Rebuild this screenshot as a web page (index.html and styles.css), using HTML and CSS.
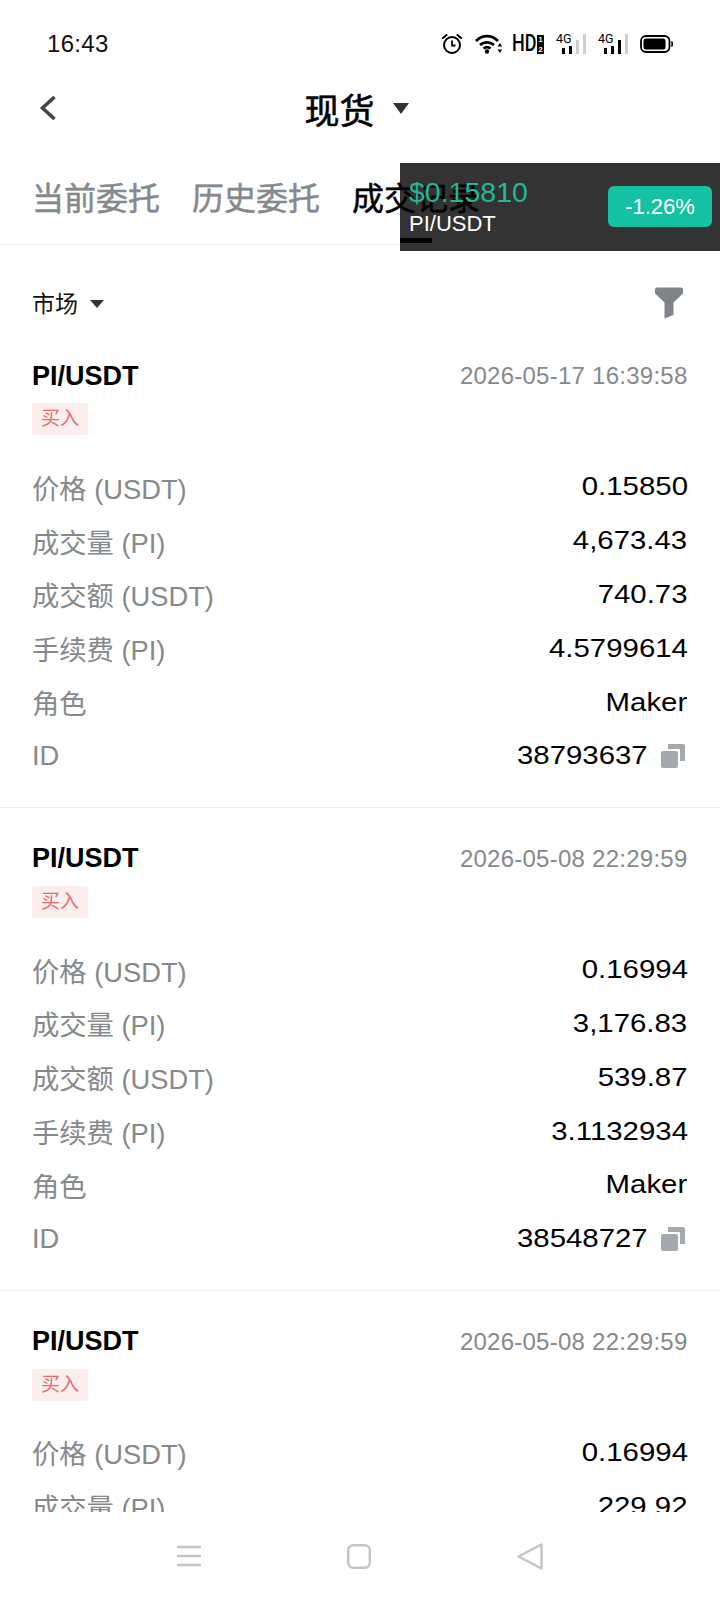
FILE: index.html
```html
<!doctype html>
<html lang="zh">

<head>
  <meta charset="UTF-8" />
  <meta name="viewport" content="width=device-width, initial-scale=1.0" />
  <title>现货</title>
  <link rel="stylesheet" href="styles.css">
</head>

<body>
  <div class="page">
    <div class="status-bar">
      <span class="time">16:43</span>
      <div class="status-icons">
        <svg class="ic-alarm" width="20" height="20" viewBox="0 0 20 20" fill="none" stroke="#000" stroke-width="2">
          <circle cx="10" cy="11" r="8" />
          <path d="M10 6.500V11.500H13.500" stroke-width="1.800" />
          <path d="M1 4L4.500 1M19 4L15.500 1" stroke-linecap="round" />
        </svg>
        <svg class="ic-wifi" width="27" height="20" viewBox="0 0 27 20" fill="none" stroke="#000" stroke-width="2.800">
          <path d="M1 7C7.500 .5 16.500 .5 23 7" />
          <path d="M5 11C9 7.500 15 7.500 19 11" />
          <path d="M8.500 14.500C10.500 13 13.500 13 15.500 14.500" />
          <circle cx="12" cy="17.500" r="2.200" fill="#000" stroke="none" />
          <path d="M25 9L22.500 12.500H27ZM25 19L22.500 15.500H27Z" fill="#000" stroke="none" />
        </svg>
        <div class="hd">
          <span class="hd-text">HD</span>
          <span class="sim-box"><b>1</b><b>2</b></span>
        </div>
        <div class="signal">
          <span class="net">4G</span>
          <div class="bars">
            <i class="b1"></i><i class="b2"></i><i class="b3 off"></i><i class="b4 off"></i>
          </div>
        </div>
        <div class="signal">
          <span class="net">4G</span>
          <div class="bars">
            <i class="b1"></i><i class="b2"></i><i class="b3"></i><i class="b4 off"></i>
          </div>
        </div>
        <svg class="ic-battery" width="33" height="18" viewBox="0 0 33 18" fill="none">
          <rect x="1" y="1" width="28.500" height="16" rx="5" stroke="#000" stroke-width="1.800" />
          <rect x="3.500" y="3.500" width="22" height="11" rx="2.500" fill="#000" />
          <path d="M31.500 6.500C32.500 7.500 32.500 10.500 31.500 11.500" stroke="#000" stroke-width="1.600" />
        </svg>
      </div>
    </div>

    <header class="top-bar">
      <svg class="back" width="18" height="26" viewBox="0 0 18 26" fill="none" stroke="#444" stroke-width="3.600">
        <path d="M15.500 2L3.500 13L15.500 24" />
      </svg>
      <div class="title">
        <span>现货</span>
        <i class="caret caret-lg"></i>
      </div>
    </header>

    <nav class="tabs">
      <a class="tab">当前委托</a>
      <a class="tab">历史委托</a>
      <a class="tab active">成交记录<span class="tab-line"></span></a>
    </nav>

    <main class="list">
      <div class="filter-row">
        <div class="market">市场 <i class="caret"></i></div>
        <svg class="funnel" width="28" height="32" viewBox="0 0 28 32" fill="#808488">
          <path d="M0 2.500Q0 .5 2 .5H26Q28 .5 28 2.500V6.500L18.500 15.500V28L9.500 31.500V15.500L0 6.500Z" />
        </svg>
      </div>

      <section class="card">
        <div class="card-head">
          <span class="pair">PI/USDT</span>
          <span class="date">2026-05-17 16:39:58</span>
        </div>
        <span class="side">买入</span>
        <div class="rows">
          <div class="row"><span>价格 (USDT)</span><b>0.15850</b></div>
          <div class="row"><span>成交量 (PI)</span><b>4,673.43</b></div>
          <div class="row"><span>成交额 (USDT)</span><b>740.73</b></div>
          <div class="row"><span>手续费 (PI)</span><b>4.5799614</b></div>
          <div class="row"><span>角色</span><b>Maker</b></div>
          <div class="row"><span>ID</span>
            <div class="id">
              <b>38793637</b>
              <svg width="24" height="24" viewBox="0 0 24 24" fill="#a5a8ac">
                <rect x="0" y="7" width="17" height="17" rx="2" />
                <path d="M7 0H22Q24 0 24 2V17H19V5H7Z" />
              </svg>
            </div>
          </div>
        </div>
      </section>

      <section class="card">
        <div class="card-head">
          <span class="pair">PI/USDT</span>
          <span class="date">2026-05-08 22:29:59</span>
        </div>
        <span class="side">买入</span>
        <div class="rows">
          <div class="row"><span>价格 (USDT)</span><b>0.16994</b></div>
          <div class="row"><span>成交量 (PI)</span><b>3,176.83</b></div>
          <div class="row"><span>成交额 (USDT)</span><b>539.87</b></div>
          <div class="row"><span>手续费 (PI)</span><b>3.1132934</b></div>
          <div class="row"><span>角色</span><b>Maker</b></div>
          <div class="row"><span>ID</span>
            <div class="id">
              <b>38548727</b>
              <svg width="24" height="24" viewBox="0 0 24 24" fill="#a5a8ac">
                <rect x="0" y="7" width="17" height="17" rx="2" />
                <path d="M7 0H22Q24 0 24 2V17H19V5H7Z" />
              </svg>
            </div>
          </div>
        </div>
      </section>

      <section class="card">
        <div class="card-head">
          <span class="pair">PI/USDT</span>
          <span class="date">2026-05-08 22:29:59</span>
        </div>
        <span class="side">买入</span>
        <div class="rows">
          <div class="row"><span>价格 (USDT)</span><b>0.16994</b></div>
          <div class="row"><span>成交量 (PI)</span><b>229.92</b></div>
        </div>
      </section>
    </main>

    <footer class="nav-bar">
      <svg width="24" height="22" viewBox="0 0 24 22" fill="none" stroke="#c4c4c4" stroke-width="2.400">
        <path d="M0 2H24M0 11H24M0 20H24" />
      </svg>
      <svg width="24" height="25" viewBox="0 0 24 25" fill="none" stroke="#c4c4c4" stroke-width="2.400">
        <rect x="1.200" y="1.200" width="21.600" height="22.600" rx="5" />
      </svg>
      <svg width="26" height="27" viewBox="0 0 26 27" fill="none" stroke="#c4c4c4" stroke-width="2.400" stroke-linejoin="round">
        <path d="M24.500 1.500V25.500L1.500 13.500Z" />
      </svg>
    </footer>

    <div class="ticker">
      <div class="ticker-info">
        <span class="ticker-price">$0.15810</span>
        <span class="ticker-pair">PI/USDT</span>
      </div>
      <span class="ticker-change">-1.26%</span>
    </div>
  </div>
</body>

</html>
```

FILE: styles.css
```css
* {
  box-sizing: border-box;
}

body {
  font-family: "Liberation Sans", "Noto Sans CJK SC", sans-serif;
  background-color: white;
  margin: 0;
  padding: 0;
}

.page {
  position: relative;
  width: 720px;
  height: 1600px;
  display: flex;
  flex-direction: column;
  overflow: hidden;
}

/* status bar */
.status-bar {
  height: 86px;
  flex-shrink: 0;
  display: flex;
  align-items: center;
  justify-content: space-between;
  padding: 2px 47px 0;
}

.time {
  font-size: 24px;
  letter-spacing: 0.3px;
  color: #111;
}

.status-icons {
  display: flex;
  align-items: center;
}

.ic-alarm {
  margin-right: 13px;
}

.ic-wifi {
  margin-right: 10px;
}

.hd {
  display: flex;
  align-items: center;
  gap: 1px;
  margin-right: 12px;
}

.hd-text {
  width: 24px;
  font-family: "Roboto", sans-serif;
  font-size: 23px;
  font-weight: 500;
  line-height: 20px;
  color: #000;
  white-space: nowrap;
  transform: scaleX(0.78);
  transform-origin: left;
}

.sim-box {
  width: 7px;
  height: 19px;
  background: #000;
  display: flex;
  flex-direction: column;
  justify-content: space-between;
}

.sim-box b {
  color: #fff;
  font-size: 8px;
  line-height: 9px;
  text-align: center;
}

.signal {
  width: 30px;
  height: 20px;
  display: flex;
  margin-right: 12px;
  position: relative;
}

.net {
  font-family: "Roboto", sans-serif;
  font-size: 12.500px;
  line-height: 11px;
  color: #000;
  position: absolute;
  left: 0;
  top: -1px;
}

.bars {
  width: 100%;
  display: flex;
  align-items: flex-end;
  justify-content: flex-end;
  gap: 4px;
}

.bars i {
  width: 3px;
  background: #000;
  display: block;
}

.bars .off {
  background: #cfcfcf;
}

.bars .b1 {
  height: 6px;
}

.bars .b2 {
  height: 8px;
}

.bars .b3 {
  height: 14px;
}

.bars .b4 {
  height: 20px;
}

/* title */
.top-bar {
  height: 44px;
  flex-shrink: 0;
  display: flex;
  align-items: center;
  justify-content: center;
  position: relative;
}

.back {
  position: absolute;
  left: 39px;
  top: 9px;
}

/* no medium CJK weight here, a thin stroke on regular gets close */
.title {
  display: flex;
  align-items: center;
  gap: 18px;
  font-size: 35px;
  -webkit-text-stroke: 0.6px #000;
  color: #000;
  margin-right: 7px;
}

.caret {
  display: inline-block;
  width: 0;
  height: 0;
  border-left: 7px solid transparent;
  border-right: 7px solid transparent;
  border-top: 8px solid #333;
}

.caret-lg {
  border-left-width: 8px;
  border-right-width: 8px;
  border-top-width: 11px;
}

/* tabs */
.tabs {
  height: 115px;
  flex-shrink: 0;
  display: flex;
  gap: 32px;
  padding: 49px 32px 0;
  border-bottom: 1px solid #eeeeee;
}

.tab {
  display: flex;
  flex-direction: column;
  align-items: center;
  font-size: 32px;
  -webkit-text-stroke: 0.5px #86898c;
  line-height: 40px;
  color: #86898c;
}

.tab.active {
  -webkit-text-stroke: 0.5px #000;
  color: #000;
}

.tab-line {
  width: 32px;
  height: 5px;
  margin-top: 19px;
  background: #000;
}

/* list */
.list {
  flex: 1;
  min-height: 0;
  overflow: hidden;
}

.filter-row {
  height: 80px;
  padding: 37px 37px 0 32px;
  display: flex;
  justify-content: space-between;
  align-items: flex-start;
}

.market {
  display: flex;
  align-items: center;
  gap: 12px;
  font-size: 23px;
  line-height: 40px;
  margin-top: 2px;
  color: #111;
}

.funnel {
  margin-top: 5px;
}

.card {
  padding: 31px 32.500px 24px 32px;
  border-bottom: 1px solid #eeeeee;
}

.card-head {
  display: flex;
  justify-content: space-between;
  align-items: center;
  height: 40px;
}

.pair {
  font-size: 27px;
  font-weight: 700;
  color: #000;
}

.date {
  font-size: 24px;
  letter-spacing: 0.25px;
  color: #86898c;
}

.side {
  display: inline-block;
  width: 56px;
  height: 32px;
  margin-top: 7px;
  border-radius: 3px;
  background: #fdeeee;
  color: #e26d6d;
  font-size: 19px;
  line-height: 32px;
  text-align: center;
}

.rows {
  margin-top: 25px;
}

.row {
  height: 53.800px;
  display: flex;
  justify-content: space-between;
  align-items: center;
  font-size: 27.300px;
  color: #86898c;
}

/* the numbers in the shot are wider than Liberation, so stretch them */
.row b {
  display: inline-block;
  font-size: 26px;
  font-weight: 400;
  color: #000;
  transform: scaleX(1.13);
  transform-origin: right;
}

.id {
  display: flex;
  align-items: center;
  gap: 13px;
  padding-right: 3px;
}

/* bottom nav */
.nav-bar {
  height: 88px;
  flex-shrink: 0;
  background: #fff;
  display: flex;
  align-items: center;
  justify-content: space-between;
  padding: 0 177px;
}

/* floating price window */
.ticker {
  position: absolute;
  left: 400px;
  top: 163px;
  width: 320px;
  height: 88px;
  background: rgba(0, 0, 0, 0.8);
  display: flex;
  justify-content: space-between;
  padding: 14px 8px 0 9px;
}

.ticker-info {
  display: flex;
  flex-direction: column;
}

.ticker-price {
  font-size: 28.500px;
  line-height: 30px;
  color: #20b898;
}

.ticker-pair {
  font-size: 22px;
  line-height: 33px;
  color: #fff;
}

.ticker-change {
  width: 104px;
  height: 41px;
  margin-top: 9px;
  border-radius: 6px;
  background: #14c2a3;
  color: #fff;
  font-size: 22px;
  line-height: 41px;
  text-align: center;
}
```
